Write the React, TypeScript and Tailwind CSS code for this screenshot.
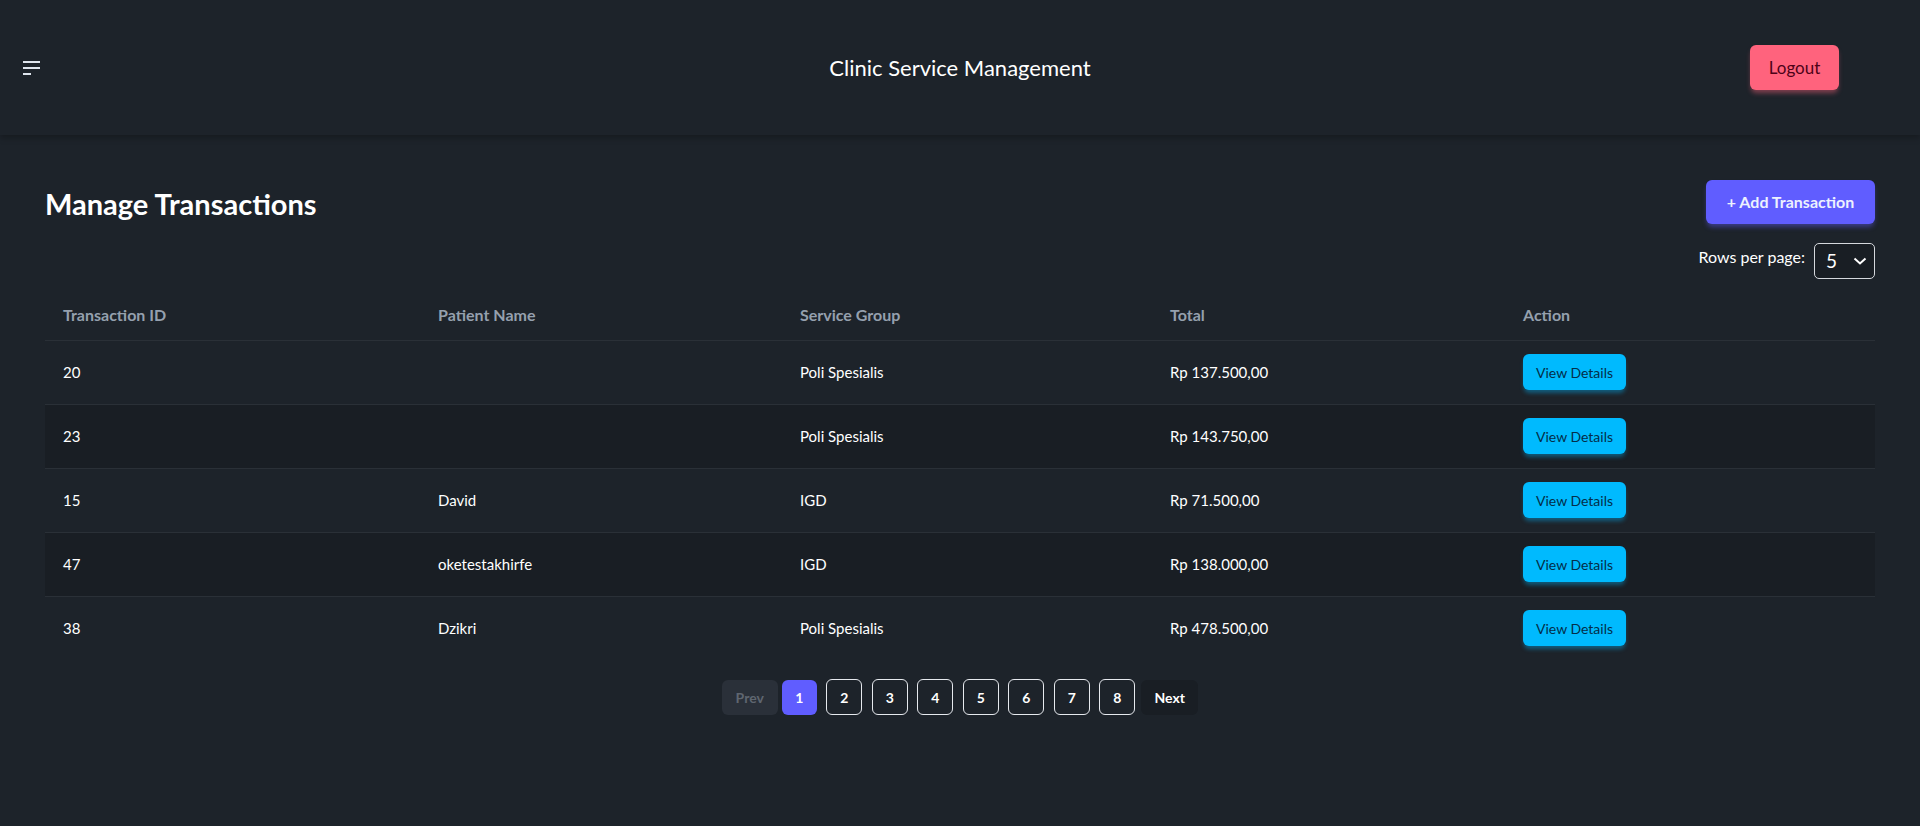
import { FC } from "react";

type Row = {
  id: number;
  patient: string;
  group: string;
  total: string;
};

const rows: Row[] = [
  { id: 20, patient: "", group: "Poli Spesialis", total: "Rp 137.500,00" },
  { id: 23, patient: "", group: "Poli Spesialis", total: "Rp 143.750,00" },
  { id: 15, patient: "David", group: "IGD", total: "Rp 71.500,00" },
  { id: 47, patient: "oketestakhirfe", group: "IGD", total: "Rp 138.000,00" },
  { id: 38, patient: "Dzikri", group: "Poli Spesialis", total: "Rp 478.500,00" },
];

const pages = [2, 3, 4, 5, 6, 7, 8];

const App: FC = () => {
  return (
    <div className="min-h-screen bg-[#1d232a] text-[#ecf0f5] font-['Lato','Segoe_UI',sans-serif]">
      {/* navbar */}
      <nav className="grid grid-cols-3 items-center h-[135px] bg-[#1d232a] shadow-[0_3px_6px_rgba(0,0,0,0.25)]">
        <div className="flex items-center pl-[23px]">
          <svg width="18" height="16" viewBox="0 0 18 16" className="text-[#dfe5ee]">
            <path d="M0 2h17M0 8h17M0 14h8" stroke="currentColor" strokeWidth="2" fill="none" />
          </svg>
        </div>
        <div className="text-center text-[22px] text-white">Clinic Service Management</div>
        <div className="flex justify-end pr-[81px]">
          <button className="h-[45px] w-[89px] rounded-md bg-[#ff637d] text-[#4d0218] text-[17px] shadow-[0_4px_5px_-1px_rgba(255,99,125,0.45)]">
            Logout
          </button>
        </div>
      </nav>

      {/* content */}
      <main className="px-[45px] pt-[45px]">
        <div className="flex items-center justify-between h-[44px]">
          <h1 className="text-[29px] leading-none font-bold text-white pt-[3px]">Manage Transactions</h1>
          <button className="h-[44px] w-[169px] rounded-md bg-[#605dff] text-[#edf1fe] text-[16px] font-bold shadow-[0_4px_5px_-1px_rgba(96,93,255,0.45)]">
            + Add Transaction
          </button>
        </div>

        <div className="flex justify-end items-start gap-[9px] mt-[19px]">
          <span className="text-[16px] text-white pt-[2px]">Rows per page:</span>
          <div className="flex items-center justify-between w-[61px] h-[36px] pl-[11px] pr-[7px] rounded-[5px] border border-[#d5d8dd] bg-[#191e24]">
            <span className="text-[19px] text-white">5</span>
            <svg width="14" height="10" viewBox="0 0 14 10" className="text-white">
              <path d="M1.5 2.5l5.5 5 5.5-5" stroke="currentColor" strokeWidth="2" fill="none" />
            </svg>
          </div>
        </div>

        {/* table */}
        <table className="w-full mt-[11px] text-[15px] border-collapse">
          <thead>
            <tr className="h-[50px] border-b border-[#2a3037]">
              <th className="w-[377px] pl-[18px] text-left font-bold text-[16px] text-[#95a0ae]">Transaction ID</th>
              <th className="w-[362px] pl-4 text-left font-bold text-[16px] text-[#95a0ae]">Patient Name</th>
              <th className="w-[370px] pl-4 text-left font-bold text-[16px] text-[#95a0ae]">Service Group</th>
              <th className="w-[353px] pl-4 text-left font-bold text-[16px] text-[#95a0ae]">Total</th>
              <th className="pl-4 text-left font-bold text-[16px] text-[#95a0ae]">Action</th>
            </tr>
          </thead>
          <tbody>
            {rows.map((r, i) => (
              <tr
                key={r.id}
                className={
                  (i % 2 === 1 ? "bg-[#191e24] " : "") +
                  (i < rows.length - 1 ? "border-b border-[#2a3037] " : "") +
                  "h-16 text-white"
                }
              >
                <td className="pl-[18px]">{r.id}</td>
                <td className="pl-4">{r.patient}</td>
                <td className="pl-4">{r.group}</td>
                <td className="pl-4">{r.total}</td>
                <td className="pl-4">
                  <button className="h-[36px] w-[103px] rounded-md bg-[#00bafe] text-[#042e49] text-[14px] shadow-[0_4px_4px_-1px_rgba(0,186,254,0.4)]">
                    View Details
                  </button>
                </td>
              </tr>
            ))}
          </tbody>
        </table>

        {/* pagination */}
        <div className="flex justify-center items-center mt-[19px] text-[14px] font-bold">
          <button className="h-[35px] w-[56px] rounded-md bg-[#2a3039] text-[#5f6670]">Prev</button>
          <button className="ml-1 h-[35px] w-[35px] rounded-md bg-[#605dff] text-white">1</button>
          {pages.map((p) => (
            <button
              key={p}
              className="ml-[9.5px] h-[36px] w-[36px] rounded-md border border-[#e6e9ee] text-white"
            >
              {p}
            </button>
          ))}
          <button className="ml-[6px] h-[35px] w-[57px] rounded-md bg-[#191e24] text-white">Next</button>
        </div>
      </main>
    </div>
  );
};

export default App;
